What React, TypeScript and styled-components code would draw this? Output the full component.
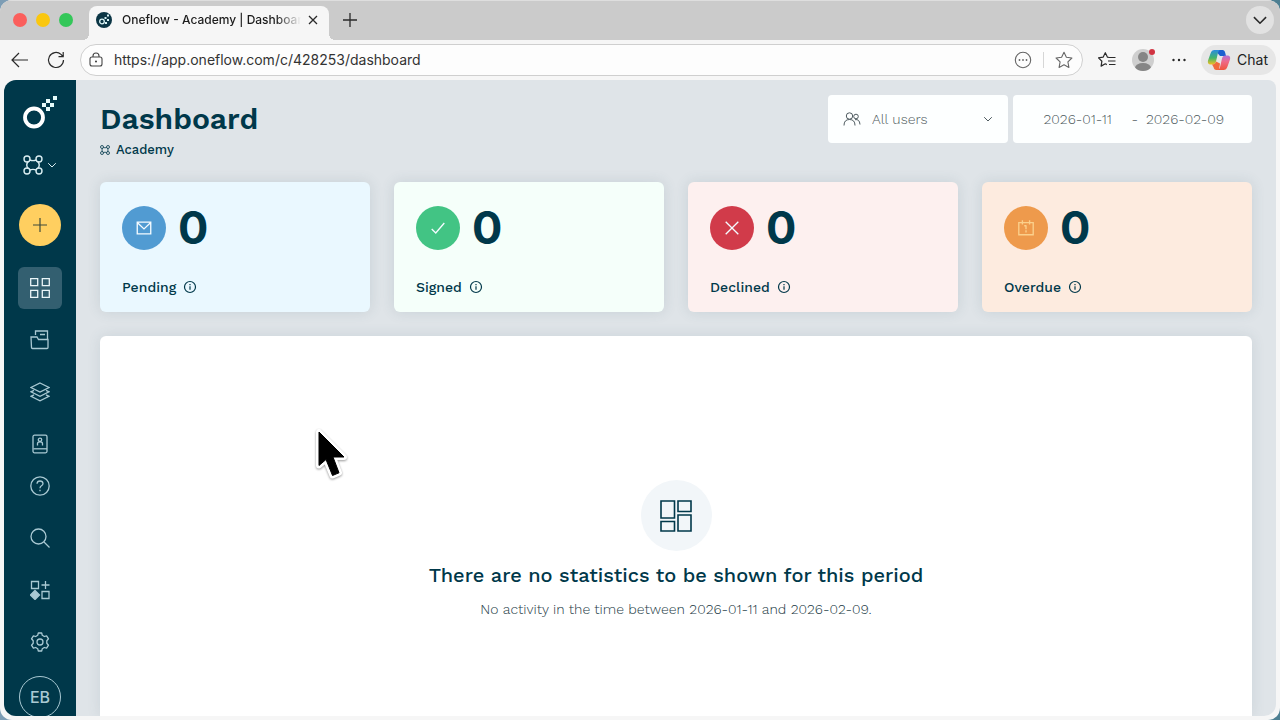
import React from "react";
import styled, { createGlobalStyle, css } from "styled-components";

const navy = "#00384a";
const appFont = `"Work Sans", Inter, "Liberation Sans", sans-serif`;
const chromeFont = `Inter, "Liberation Sans", sans-serif`;

const GlobalStyle = createGlobalStyle`
  *, *::before, *::after { box-sizing: border-box; }
  body { margin: 0; background: linear-gradient(90deg, #7d9db5, #8d979c 30%, #8d979c 70%, #4d7f92); overflow: hidden; }
  button, input, select { font: inherit; color: inherit; border: 0; margin: 0; padding: 0; background: none; }
  button { display: inline-flex; align-items: center; justify-content: center; cursor: pointer; }
  h1, h2, p { margin: 0; }
`;

const BrowserWindow = styled.div`
  position: relative;
  display: flex;
  flex-direction: column;
  height: 100vh;
  overflow: hidden;
  border-radius: 12px;
  background: #f6f6f6;
  font-family: ${chromeFont};
`;

const TabStrip = styled.div`
  display: flex;
  align-items: flex-end;
  flex: none;
  height: 40px;
  padding: 0 6px 0 13px;
  background: #cbcbcb;
  box-shadow: inset 0 1px 0 #dedede;
`;

const TrafficLights = styled.div`
  display: flex;
  align-self: center;
  gap: 9px;
  margin-right: 16px;
`;

const Light = styled.button<{ $color: string }>`
  width: 14px;
  height: 14px;
  border-radius: 50%;
  background: ${(p) => p.$color};
`;

const Tab = styled.div`
  position: relative;
  display: flex;
  align-items: center;
  width: 240px;
  height: 34px;
  padding: 0 8px 6px 7px;
  border-radius: 8px 8px 0 0;
  background: #f6f6f6;
  &::before, &::after {
    content: "";
    position: absolute;
    bottom: 0;
    width: 6px;
    height: 6px;
  }
  &::before { right: 100%; background: radial-gradient(circle at 0 0, transparent 6px, #f6f6f6 6px); }
  &::after { left: 100%; background: radial-gradient(circle at 100% 0, transparent 6px, #f6f6f6 6px); }
`;

const TabTitle = styled.span`
  flex: 1;
  min-width: 0;
  margin: 0 4px 0 10px;
  overflow: hidden;
  white-space: nowrap;
  font-size: 12px;
  font-weight: 500;
  line-height: 16px;
  color: #1c1c1c;
  mask-image: linear-gradient(90deg, #000 86%, transparent);
`;

const IconButton = styled.button<{ $size?: number }>`
  flex: none;
  width: ${(p) => p.$size ?? 24}px;
  height: ${(p) => p.$size ?? 24}px;
  color: #2a2a2a;
`;

const SoftIconButton = styled(IconButton)`
  color: #666;
`;

const NewTab = styled(IconButton)`
  align-self: center;
  margin-left: 9px;
`;

const TabMenu = styled(IconButton)`
  align-self: center;
  margin-left: auto;
  border-radius: 50%;
  background: #e2e2e2;
`;

const Toolbar = styled.div`
  display: flex;
  align-items: center;
  flex: none;
  height: 40px;
  padding: 0 4px 0 8px;
`;

const Reload = styled(IconButton)`
  margin: 0 12px;
`;

const AddressBar = styled.div`
  display: flex;
  align-items: center;
  flex: 1;
  min-width: 0;
  height: 32px;
  padding: 0 6px 0 7px;
  border: 1px solid #cfcfcf;
  border-radius: 16px;
  background: #fdfdfd;
  color: #444;
`;

const AddressInput = styled.input`
  flex: 1;
  min-width: 0;
  margin-left: 10px;
  font-size: 14px;
  line-height: 20px;
  color: #333;
  outline: none;
`;

const Divider = styled.span`
  width: 1px;
  height: 16px;
  margin: 0 8px;
  background: #d6d6d6;
`;

const ToolbarActions = styled.div`
  display: flex;
  align-items: center;
  gap: 12px;
  margin-left: 12px;
`;

const ChatButton = styled.button`
  height: 30px;
  gap: 6px;
  padding: 0 8px 0 6px;
  margin-left: -2px;
  border-radius: 15px;
  background: #e6e6e6;
  font-size: 14px;
  line-height: 20px;
  color: #222;
`;

const Page = styled.div`
  display: flex;
  flex: 1;
  min-height: 0;
  margin: 0 4px 4px;
  overflow: hidden;
  border-radius: 12px 8px 12px 12px;
  background: #dfe4e8;
  font-family: ${appFont};
  color: ${navy};
`;

const Sidebar = styled.nav`
  display: flex;
  flex-direction: column;
  align-items: center;
  flex: none;
  width: 72px;
  padding-top: 15px;
  background: ${navy};
  color: #fff;
  & > * { flex: none; }
`;

const Workspace = styled.button`
  gap: 4px;
  height: 24px;
  margin-top: 24px;
  color: #d9edf1;
`;

const AddButton = styled.button`
  width: 42px;
  height: 42px;
  margin: 27px 0 21px;
  border-radius: 50%;
  background: #ffcf60;
  color: #3f4a3a;
`;

const NavGroup = styled.div`
  display: flex;
  flex-direction: column;
  gap: 10px;
`;

const NavItem = styled.a<{ $active?: boolean }>`
  display: flex;
  align-items: center;
  justify-content: center;
  width: 44px;
  height: 42px;
  border-radius: 6px;
  color: #a9c9d3;
  ${(p) =>
    p.$active &&
    css`
      background: #335f70;
      color: #eaf5f8;
    `}
`;

const Account = styled.button`
  width: 42px;
  height: 42px;
  margin-top: 13px;
  border: 1px solid #a9c9d3;
  border-radius: 50%;
  font-family: ${chromeFont};
  font-size: 16px;
  font-weight: 500;
  color: #a9c9d3;
`;

const Main = styled.main`
  display: flex;
  flex-direction: column;
  flex: 1;
  min-width: 0;
  padding: 15px 24px 0;
`;

const Header = styled.header`
  display: flex;
  justify-content: space-between;
  height: 87px;
`;

const Title = styled.h1`
  margin-top: 6px;
  font-size: 30px;
  font-weight: 600;
  line-height: 36px;
`;

const Crumb = styled.p`
  display: flex;
  align-items: center;
  gap: 6px;
  margin-top: 4px;
  font-size: 13px;
  font-weight: 500;
  line-height: 18px;
`;

const Filters = styled.div`
  display: flex;
  gap: 5px;
`;

const FilterBox = styled.div<{ $width: number }>`
  display: flex;
  align-items: center;
  width: ${(p) => p.$width}px;
  height: 48px;
  border-radius: 4px;
  background: #fdffff;
  font-size: 14px;
  font-weight: 300;
  line-height: 20px;
  color: #4f5b60;
`;

const UsersBox = styled(FilterBox)`
  padding: 0 15px;
`;

const UserSelect = styled.select`
  flex: 1;
  min-width: 0;
  margin-left: 11px;
  appearance: none;
  outline: none;
`;

const DateBox = styled(FilterBox)`
  justify-content: flex-end;
  gap: 8px;
  padding-right: 26px;
`;

const DateInput = styled.input`
  width: 80px;
  outline: none;
`;

const Cards = styled.div`
  display: grid;
  grid-template-columns: repeat(4, 1fr);
  gap: 24px;
`;

const Card = styled.section<{ $bg: string }>`
  height: 130px;
  padding: 24px 22px 0;
  border-radius: 6px;
  background: ${(p) => p.$bg};
  box-shadow: 0 0 14px rgba(60, 90, 105, 0.14);
`;

const CardTop = styled.div`
  display: flex;
  align-items: center;
  gap: 12px;
  height: 44px;
`;

const CardIcon = styled.span<{ $color: string }>`
  display: flex;
  align-items: center;
  justify-content: center;
  width: 44px;
  height: 44px;
  border-radius: 50%;
  background: ${(p) => p.$color};
  color: #f4fbff;
`;

const Count = styled.span`
  font-family: ${chromeFont};
  font-size: 45px;
  font-weight: 700;
  line-height: 46px;
`;

const CardLabel = styled.div`
  display: flex;
  align-items: center;
  gap: 7px;
  margin-top: 27px;
  font-size: 14px;
  font-weight: 500;
  line-height: 20px;
`;

const Panel = styled.section`
  display: flex;
  flex-direction: column;
  align-items: center;
  flex: 1;
  margin-top: 24px;
  padding-top: 144px;
  border-radius: 6px 6px 0 0;
  background: #fff;
  box-shadow: 0 0 14px rgba(60, 90, 105, 0.12);
  text-align: center;
`;

const EmptyIcon = styled.div`
  display: flex;
  align-items: center;
  justify-content: center;
  width: 71px;
  height: 71px;
  border-radius: 50%;
  background: #f2f6f9;
`;

const EmptyTitle = styled.h2`
  margin-top: 10px;
  font-size: 20px;
  font-weight: 500;
  line-height: 28px;
`;

const EmptyText = styled.p`
  margin-top: 10px;
  font-size: 14px;
  font-weight: 300;
  line-height: 20px;
  color: #1c3a45;
`;

const Cursor = styled.svg`
  position: absolute;
  left: 313px;
  top: 426px;
  pointer-events: none;
  filter: drop-shadow(0 1px 1px rgba(0, 0, 0, 0.4));
`;

type IconProps = { size?: number; stroke?: number; box?: number; children: React.ReactNode };

const Icon = ({ size = 20, box = 20, stroke = 1.3, children }: IconProps) => (
  <svg width={size} height={size} viewBox={`0 0 ${box} ${box}`} fill="none" stroke="currentColor" strokeWidth={stroke} aria-hidden="true">
    {children}
  </svg>
);

const Chevron = ({ size }: { size: number }) => (
  <Icon size={size} box={10} stroke={1}>
    <path d="M1.200 3.200L5 7l3.800-3.800" />
  </Icon>
);

const Knot = ({ size, stroke }: { size: number; stroke: number }) => (
  <Icon size={size} box={20} stroke={stroke}>
    <circle cx="4" cy="4" r="3" />
    <circle cx="16" cy="4" r="3" />
    <circle cx="4" cy="16" r="3" />
    <circle cx="16" cy="16" r="3" />
    <path d="M6.800 5q3.200 1.200 6.400 0M6.800 15q3.200-1.200 6.400 0M5 6.800q-2.500 3.200 0 6.400M15 6.800q2.500 3.200 0 6.400" />
  </Icon>
);

const Info = () => (
  <Icon size={14} box={14} stroke={1.2}>
    <circle cx="7" cy="7" r="5.500" />
    <path d="M7 6.300v3.500M7 4v1.200" />
  </Icon>
);

const Logo = () => (
  <svg width="36" height="34" viewBox="0 0 36 34" aria-label="Oneflow" role="img">
    <circle cx="12" cy="22.500" r="9" fill="none" stroke="#fff" strokeWidth="3.800" />
    <path fill="#e6fbfa" d="M31 1h4v4h-4zM24 4h4v4h-4zM20 8h4v4h-4zM28 8h4v4h-4zM24 12h4v4h-4z" />
  </svg>
);

const Favicon = () => (
  <svg width="16" height="16" viewBox="0 0 16 16" aria-hidden="true">
    <circle cx="8" cy="8" r="8" fill="#0b3545" />
    <circle cx="6" cy="9.500" r="2.300" fill="none" stroke="#d8f2f4" strokeWidth="1.300" />
    <path fill="#d8f2f4" d="M8.500 5h2v2h-2zM11 2.500h2v2h-2zM11 7h2v2h-2zM9 10h2v2H9z" />
  </svg>
);

const Avatar = () => (
  <svg width="24" height="24" viewBox="0 0 24 24" aria-hidden="true">
    <defs>
      <clipPath id="face"><circle cx="12" cy="12" r="11" /></clipPath>
    </defs>
    <circle cx="12" cy="12" r="11" fill="#cfcfcf" />
    <g clipPath="url(#face)" fill="#858585">
      <circle cx="12" cy="9" r="5" />
      <ellipse cx="12" cy="20" rx="8" ry="5" />
    </g>
    <circle cx="21" cy="4" r="3" fill="#d13442" />
  </svg>
);

const Copilot = () => (
  <svg width="24" height="22" viewBox="0 0 24 22" aria-hidden="true">
    <defs>
      <linearGradient id="cpA" x1="0" y1="0" x2="0" y2="1">
        <stop offset="0" stopColor="#2a8be0" />
        <stop offset=".55" stopColor="#42b56a" />
        <stop offset="1" stopColor="#f2c021" />
      </linearGradient>
      <linearGradient id="cpB" x1="0" y1="0" x2="0" y2="1">
        <stop offset="0" stopColor="#b070d8" />
        <stop offset=".4" stopColor="#ee6a8c" />
        <stop offset="1" stopColor="#f0553d" />
      </linearGradient>
    </defs>
    <path fill="#1c5fd0" d="M8 1h7.500c1.500 0 2.200 1 2.600 2.400L19 7h-6z" />
    <path fill="url(#cpA)" d="M7.500 1H13c-1.300.6-1.800 2-2.300 4L9 12.500C8.500 14.500 7.500 15.500 5.500 15.500H3.500C1 15.500.5 13.500 1 11.500L3.500 4.500C4.300 2 5.500 1 7.500 1z" />
    <path fill="#f06a3c" d="M5 15.500c2.500 0 3.500-1 4-3l4 2-1 6.500H9.500C7.500 21 7 20 6.500 18z" />
    <path fill="url(#cpB)" d="M16.500 21H11c1.300-.6 1.800-2 2.300-4L15 9.500c.5-2 1.500-3 3.500-3h2c2.500 0 3 2 2.500 4L20.500 17.500c-.8 2.500-2 3.500-4 3.500z" />
  </svg>
);

const star = "M10 2.200l2.400 5 5.500.8-4 3.900 1 5.500-4.900-2.600-4.900 2.600 1-5.500-4-3.900 5.500-.8z";

const mainNav = [
  {
    label: "Dashboard",
    icon: <path d="M.700.700h7v7h-7zM12.300.700h7v7h-7zM.700 12.300h7v7h-7zM12.300 12.300h7v7h-7z" />,
  },
  {
    label: "Documents",
    icon: <><path d="M5.500 5V1h12v8M10 4.500h5" /><path d="M1 7h6l1.500 2.500H18v8q0 1-1 1H2.500q-1 0-1-1z" /></>,
  },
  {
    label: "Templates",
    icon: <><path d="M10 1l9 4.500-9 4.500-9-4.500z" /><path d="M4 8.300L1 9.800l9 4.500 9-4.500-3-1.500" /><path d="M4 12.800L1 14.300l9 4.500 9-4.500-3-1.500" /></>,
  },
  {
    label: "Contacts",
    icon: <><rect x="3" y="1.200" width="14" height="17.600" rx="1.500" /><path d="M3.500 14.800H17" /><circle cx="10" cy="5.800" r="1.700" /><path d="M7.500 11.500V9.500q0-1.700 2.500-1.700t2.500 1.700v2" /></>,
  },
];

const toolNav = [
  {
    label: "Help",
    icon: <><circle cx="10" cy="10" r="9.200" /><path d="M7 7.800q.2-2.800 3-2.800t3 2.500q0 1.300-1.500 2.200T10 12.300M10 13.800v1.500" /></>,
  },
  {
    label: "Search",
    icon: <><circle cx="8.500" cy="8.500" r="7.500" /><path d="M14 14l5.500 5.500" /></>,
  },
  {
    label: "Apps",
    icon: <><path d="M1.500 1.500h7v7h-7zM12 11.500h7v7h-7zM15.500 1v8M11.500 5h8" /><path fill="currentColor" d="M5 10.500l4.500 4.500L5 19.500.500 15z" /></>,
  },
  {
    label: "Settings",
    icon: <><circle cx="10" cy="10" r="3" /><path d="M8.300 1h3.400l.6 2.300 2 1.200 2.300-.7 1.900 3-1.700 1.900v2.600l1.700 1.900-1.900 3-2.300-.7-2 1.200-.6 2.300H8.300l-.6-2.300-2-1.200-2.300.7-1.900-3 1.700-1.900V8.700L1.500 6.800l1.900-3 2.300.7 2-1.200z" strokeLinejoin="round" /></>,
  },
];

const stats = [
  { label: "Pending", bg: "#eaf8ff", color: "#519bd2", icon: <path d="M2.500 3.500h15v13h-15zM2.500 4l7.500 7 7.500-7" /> },
  { label: "Signed", bg: "#f5fffa", color: "#42c484", icon: <path d="M3 11l4.500 4.500L17 4.500" /> },
  { label: "Declined", bg: "#fdf0ef", color: "#d13b4a", icon: <path d="M3 3l14 14M17 3L3 17" /> },
  { label: "Overdue", bg: "#fdebdf", color: "#ee9a4c", icon: <path stroke="#fbd08c" d="M2 4h16v13.500H2zM6 1.500V6M14 1.500V6M10 7v4.500M10 12.500V15M8 7.500H10" /> },
];

const arrow = "M6 6V39.500L13 33.500 19.500 49.500 26 46.800 20 31H31z";

export default function App() {
  return (
    <>
      <GlobalStyle />
      <BrowserWindow>
        <TabStrip>
          <TrafficLights>
            <Light $color="#fb5f5c" aria-label="Close window" />
            <Light $color="#fac70f" aria-label="Minimize window" />
            <Light $color="#34c759" aria-label="Zoom window" />
          </TrafficLights>
          <Tab>
            <Favicon />
            <TabTitle>Oneflow - Academy | Dashboard</TabTitle>
            <IconButton $size={16} aria-label="Close tab">
              <Icon size={10} box={10} stroke={1.3}><path d="M1 1l8 8M9 1L1 9" /></Icon>
            </IconButton>
          </Tab>
          <NewTab aria-label="New tab">
            <Icon size={14} box={14} stroke={1.3}><path d="M7 0v14M0 7h14" /></Icon>
          </NewTab>
          <TabMenu $size={28} aria-label="Tab list"><Chevron size={16} /></TabMenu>
        </TabStrip>

        <Toolbar>
          <IconButton aria-label="Back">
            <Icon stroke={1.2}><path d="M18 10H2.500M9 3l-7 7 7 7" /></Icon>
          </IconButton>
          <Reload aria-label="Reload">
            <Icon stroke={1.2}><path d="M17.500 10a7.500 7.500 0 1 1-2.500-5.600L17 6.500M17.200 2v4.700h-4.700" /></Icon>
          </Reload>
          <AddressBar>
            <Icon size={16} box={16} stroke={1.1}><rect x="2" y="5" width="12" height="9" rx="2" /><path d="M5 5V4a3 3 0 0 1 6 0v1" /><circle cx="8" cy="9.500" r=".500" fill="currentColor" /></Icon>
            <AddressInput aria-label="Address" defaultValue="https://app.oneflow.com/c/428253/dashboard" />
            <SoftIconButton aria-label="Page options">
              <Icon size={18} box={18} stroke={1.1}><circle cx="9" cy="9" r="7.700" /><path strokeWidth="1.800" strokeLinecap="round" d="M5.500 9h0M9 9h0M12.500 9h0" /></Icon>
            </SoftIconButton>
            <Divider />
            <SoftIconButton aria-label="Add to favorites">
              <Icon stroke={1.1}><path strokeLinejoin="round" d={star} /></Icon>
            </SoftIconButton>
          </AddressBar>
          <ToolbarActions>
            <IconButton aria-label="Favorites">
              <Icon stroke={1.2}><path strokeLinejoin="round" d="M12 7.500L10.500 7.200 8.300 2.700 6.100 7.200 1.500 7.900l3.400 3.300-.8 4.900 4.200-2.300 1.500.8M12 7.500h6.500M11 11h7.500M12 14.500h6.500" /></Icon>
            </IconButton>
            <IconButton aria-label="Profile"><Avatar /></IconButton>
            <IconButton aria-label="More">
              <Icon stroke={2.4}><path strokeLinecap="round" d="M4.500 10h0M10 10h0M15.500 10h0" /></Icon>
            </IconButton>
            <ChatButton><Copilot />Chat</ChatButton>
          </ToolbarActions>
        </Toolbar>

        <Page>
          <Sidebar aria-label="Main">
            <Logo />
            <Workspace aria-label="Switch workspace">
              <Knot size={20} stroke={1.4} />
              <Chevron size={10} />
            </Workspace>
            <AddButton aria-label="Create">
              <Icon size={14} box={14} stroke={1.2}><path d="M7 0v14M0 7h14" /></Icon>
            </AddButton>
            <NavGroup>
              {mainNav.map((item, i) => (
                <NavItem key={item.label} href="#" aria-label={item.label} $active={i === 0}><Icon>{item.icon}</Icon></NavItem>
              ))}
            </NavGroup>
            <NavGroup>
              {toolNav.map((item) => (
                <NavItem key={item.label} href="#" aria-label={item.label}><Icon>{item.icon}</Icon></NavItem>
              ))}
            </NavGroup>
            <Account>EB</Account>
          </Sidebar>

          <Main>
            <Header>
              <div>
                <Title>Dashboard</Title>
                <Crumb><Knot size={10} stroke={1.6} />Academy</Crumb>
              </div>
              <Filters>
                <UsersBox $width={180}>
                  <Icon size={18} box={18} stroke={1}>
                    <circle cx="6.500" cy="6" r="3.200" />
                    <path d="M1 15.500q0-6 5.500-6t5.500 6" />
                    <circle cx="13" cy="6.500" r="2.300" />
                    <path d="M12 9.700q4.500-1 5 4.800" />
                  </Icon>
                  <UserSelect aria-label="Users" defaultValue="all">
                    <option value="all">All users</option>
                  </UserSelect>
                  <Chevron size={10} />
                </UsersBox>
                <DateBox $width={239}>
                  <DateInput aria-label="From date" defaultValue="2026-01-11" />
                  <span>-</span>
                  <DateInput aria-label="To date" defaultValue="2026-02-09" />
                </DateBox>
              </Filters>
            </Header>

            <Cards>
              {stats.map((stat) => (
                <Card key={stat.label} $bg={stat.bg}>
                  <CardTop>
                    <CardIcon $color={stat.color}><Icon size={18} stroke={1.5}>{stat.icon}</Icon></CardIcon>
                    <Count>0</Count>
                  </CardTop>
                  <CardLabel>{stat.label}<Info /></CardLabel>
                </Card>
              ))}
            </Cards>

            <Panel>
              <EmptyIcon>
                <Icon size={32} box={32} stroke={1.6}>
                  <path d="M1 1h13.500v17H1zM18 1h13v10.500H18zM1 21.500h13.500V31H1zM18 15h13v16H18z" />
                </Icon>
              </EmptyIcon>
              <EmptyTitle>There are no statistics to be shown for this period</EmptyTitle>
              <EmptyText>No activity in the time between 2026-01-11 and 2026-02-09.</EmptyText>
            </Panel>
          </Main>
        </Page>

        <Cursor width="40" height="60" viewBox="0 0 40 60" aria-hidden="true">
          <path d={arrow} fill="#fff" stroke="#fff" strokeWidth="6" strokeLinejoin="round" />
          <path d={arrow} fill="#000" stroke="#000" strokeWidth="1" strokeLinejoin="round" />
        </Cursor>
      </BrowserWindow>
    </>
  );
}
